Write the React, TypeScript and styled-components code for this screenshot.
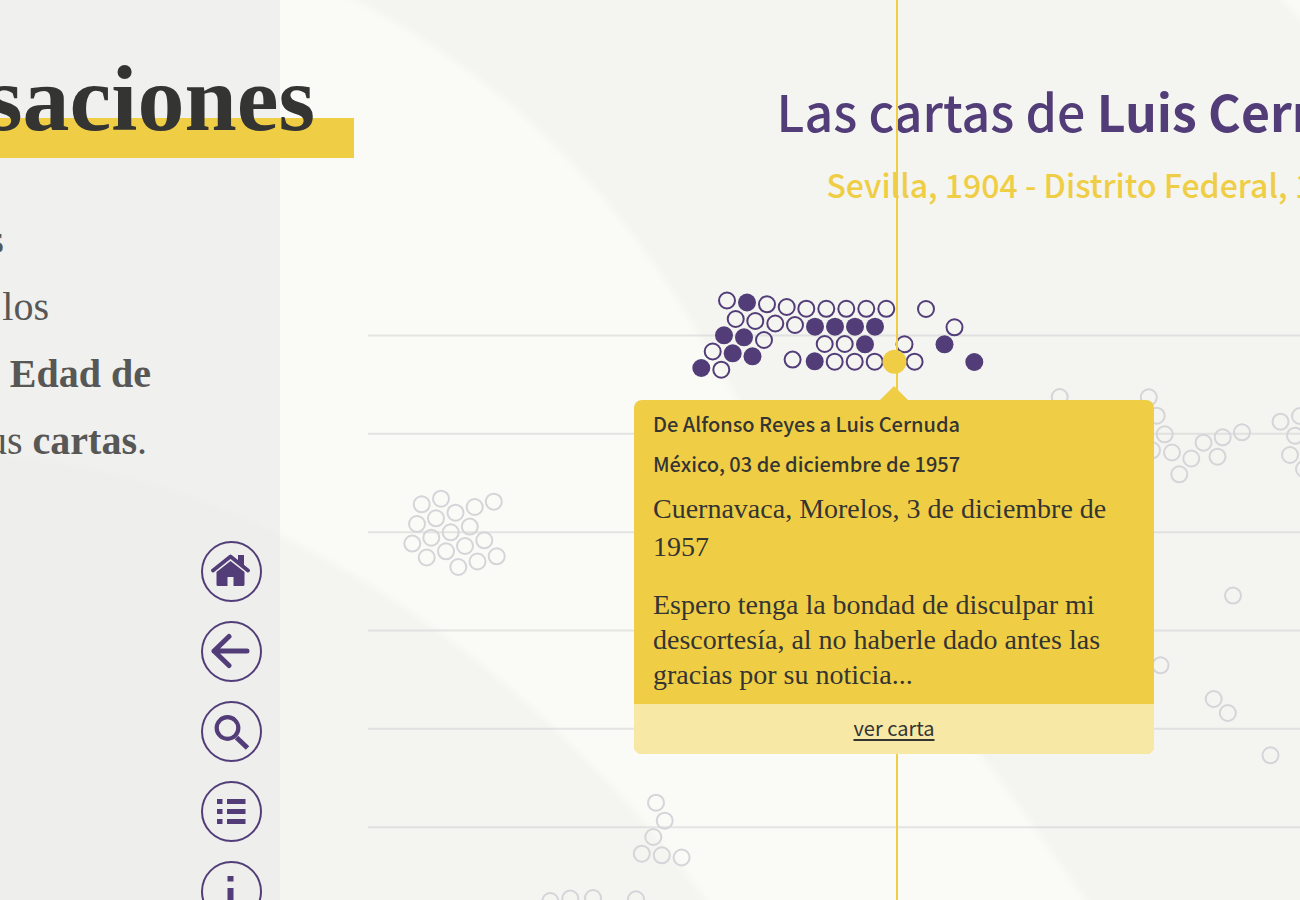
import React from "react";
import styled, { createGlobalStyle } from "styled-components";

const purple = "#523d78";
const yellow = "#efce45";
const sans = `"Noto Sans CJK SC", "Noto Sans", sans-serif`;
const serif = `"Liberation Serif", serif`;

const GlobalStyle = createGlobalStyle`
  * { box-sizing: border-box; }
  body { margin: 0; background: #fafbf6; color: #343433; overflow: hidden; }
  h1, h2, h3, p { margin: 0; font-weight: 400; }
`;

const Page = styled.div`
  position: relative;
  display: flex;
  height: 100vh;
  overflow: hidden;
`;

const Backdrop = styled.svg`
  position: absolute;
  inset: 0;
`;

const Sidebar = styled.aside`
  position: relative;
  z-index: 2;
  display: flex;
  flex: none;
  flex-direction: column;
  align-items: flex-end;
  width: 280px;
  padding-top: 38px;
  background: rgba(234, 234, 234, 0.6);
  font-family: ${serif};
`;

const SiteTitle = styled.h1`
  display: flex;
  justify-content: flex-end;
  width: 354px;
  margin-right: -74px;
  padding-right: 39px;
  background: linear-gradient(${yellow}, ${yellow}) bottom / 100% 40px no-repeat;
  font-size: 94px;
  font-weight: 700;
  line-height: 120px;
`;

const Intro = styled.div`
  align-self: stretch;
  margin: 48px 0 67px;
  color: #575756;
  font-size: 40px;
  line-height: 67px;
`;

const IntroLine = styled.p<{ $end: number }>`
  display: flex;
  justify-content: flex-end;
  width: ${(p) => p.$end}px;
  white-space: pre;
`;

const Nav = styled.nav`
  display: flex;
  flex-direction: column;
  gap: 19px;
  margin-right: 18px;
`;

const NavButton = styled.button`
  display: flex;
  align-items: center;
  justify-content: center;
  width: 61px;
  height: 61px;
  padding: 0;
  border: 2px solid ${purple};
  border-radius: 50%;
  background: none;
  color: ${purple};
  cursor: pointer;
`;

const Main = styled.main`
  position: relative;
  flex: 1 0 auto;
  min-width: 1546px;
  padding-left: 88px;
`;

const Header = styled.header`
  height: 240px;
  padding-top: 74px;
  font-family: ${sans};
  text-align: center;
  white-space: nowrap;
`;

const Heading = styled.h2`
  color: ${purple};
  font-size: 50px;
  font-weight: 500;
  line-height: 72px;
`;

const Subheading = styled.p`
  margin-top: 14px;
  color: ${yellow};
  font-size: 32px;
  font-weight: 500;
  line-height: 48px;
`;

const Plot = styled.svg`
  display: block;
`;

const Marker = styled.div`
  position: absolute;
  top: 0;
  bottom: 0;
  left: 616px;
  width: 2px;
  background: ${yellow};
`;

const Tooltip = styled.article`
  position: absolute;
  top: 400px;
  left: 354px;
  width: 520px;
  border-radius: 8px;
  background: ${yellow};

  &::before {
    content: "";
    position: absolute;
    top: -14px;
    left: 246px;
    border: 14px solid transparent;
    border-top: 0;
    border-bottom-color: ${yellow};
  }
`;

const TooltipBody = styled.div`
  padding: 4px 19px 12px;
`;

const TooltipTitle = styled.h3`
  font-family: ${sans};
  font-size: 20px;
  font-weight: 500;
  line-height: 40px;
`;

const Excerpt = styled.p<{ $line: number; $gap: number }>`
  margin-top: ${(p) => p.$gap}px;
  font-family: ${serif};
  font-size: 28px;
  line-height: ${(p) => p.$line}px;
`;

const TooltipFooter = styled.footer`
  padding-bottom: 2px;
  border-radius: 0 0 8px 8px;
  background: #f8e8a5;
  font-family: ${sans};
  font-size: 20px;
  line-height: 48px;
  text-align: center;

  a {
    color: inherit;
    text-decoration-thickness: 2px;
    text-underline-offset: 3px;
  }
`;

const gridLines = [335.5, 433.8, 532.2, 630.5, 728.8, 827.2];

const sent: [number, number][] = [
  [701.3, 368], [724, 335.3], [744, 337.3], [732.7, 353.3], [752.5, 356.3],
  [747, 302.5], [815, 326.7], [835, 326.7], [855, 326.7], [875, 326.7],
  [865, 344.3], [814.7, 361.3], [944.5, 344.3], [974.3, 362],
];

const received: [number, number][] = [
  [727, 300.5], [767, 304.3], [786.7, 307], [806.3, 308.7], [826.3, 308.8],
  [846.3, 308.8], [866.3, 308.8], [886.3, 308.8], [735.7, 319], [755.3, 321],
  [775.3, 323.5], [795, 325], [764, 340], [712.7, 351.5], [721.3, 369.7],
  [792.6, 359.6], [824.7, 344], [844.7, 344], [834.7, 361.7], [854.7, 361.7],
  [874.7, 361.7], [914.6, 361.7], [904.5, 344.3], [926, 309], [954.5, 327.3],
];

const others: [number, number][] = [
  [1059.7, 397], [1148.8, 397.3], [1156.7, 415.7], [1164.7, 434.3],
  [1152, 450.3], [1172, 452.5], [1191.3, 458.5], [1179.3, 474.3],
  [1203.5, 442.7], [1222.7, 437.3], [1242, 432.3], [1217.5, 456.7],
  [1280.5, 421.7], [1300, 416], [1295, 435.7], [1290, 455], [1304, 469],
  [421.7, 504.3], [441, 498.7], [417, 524], [436, 518.3], [455.5, 512.7],
  [474.7, 507], [493.8, 501.7], [412.3, 543.6], [431.3, 537.7],
  [450.7, 532.3], [469.8, 526.6], [426.7, 557.5], [446, 551.3], [465, 546],
  [484.3, 540.3], [458.3, 567], [477.5, 561.5], [496.7, 556.3],
  [656, 802.7], [664.7, 820.7], [653.3, 837], [641.8, 853.7],
  [661.8, 855.3], [681.6, 857.5], [550.3, 901], [570.3, 898.5],
  [593, 898], [636, 899.3],
  [1233, 595.6], [1160.5, 665.3], [1213.7, 699], [1227.8, 713], [1270.5, 755.3],
];

const icons: { label: string; art: React.ReactNode }[] = [
  {
    label: "Inicio",
    art: (
      <>
        <path d="M3 19.500L20.500 5.500L38 19.500" fill="none" stroke="currentColor" strokeWidth="3.800" strokeLinecap="round" strokeLinejoin="round" />
        <path d="M28 4H34V15L28 10Z" />
        <path d="M20.500 10L34.500 21V33.500Q34.500 35 33 35H23.500V26H17.500V35H8Q6.500 35 6.500 33.500V21Z" />
      </>
    ),
  },
  {
    label: "Volver",
    art: <path d="M37 20H4M19 5.500L4 20L19 34.500" fill="none" stroke="currentColor" strokeWidth="5" strokeLinecap="round" strokeLinejoin="round" />,
  },
  {
    label: "Buscar",
    art: (
      <>
        <circle cx="17.500" cy="17" r="10.800" fill="none" stroke="currentColor" strokeWidth="4.200" />
        <path d="M26.500 26.500L37.500 37" fill="none" stroke="currentColor" strokeWidth="5" />
      </>
    ),
  },
  {
    label: "Índice",
    art: (
      <path d="M7 8H12.500V13H7ZM17 8H35.500V13H17ZM7 18H12.500V23H7ZM17 18H35.500V23H17ZM7 28H12.500V33H7ZM17 28H35.500V33H17Z" />
    ),
  },
  {
    label: "Información",
    art: <path d="M17.500 5H23.500V10.500H17.500ZM17.500 17H23.500V35H17.500Z" />,
  },
];

export default function App() {
  return (
    <Page>
      <GlobalStyle />
      <Backdrop width="100%" height="100%" fill="#f4f5f0" aria-hidden="true">
        <defs>
          <filter id="soft">
            <feGaussianBlur stdDeviation="3" />
          </filter>
        </defs>
        <g filter="url(#soft)">
          <path d="M335 -10C480 60 600 170 690 320C790 490 900 650 1000 780L1100 920H2000V300C1600 260 1380 120 1275 -10Z" />
          <path d="M-20 455C200 465 400 585 540 715C610 780 665 840 720 920H-20Z" />
        </g>
      </Backdrop>

      <Sidebar>
        <SiteTitle>saciones</SiteTitle>
        <Intro>
          <IntroLine $end={4}>s</IntroLine>
          <IntroLine $end={49}>los</IntroLine>
          <IntroLine $end={151}>
            a <b>Edad de</b>
          </IntroLine>
          <IntroLine $end={147}>
            us <b>cartas</b>.
          </IntroLine>
        </Intro>
        <Nav aria-label="Secciones">
          {icons.map((icon) => (
            <NavButton key={icon.label} aria-label={icon.label}>
              <svg width="41" height="41" viewBox="1 0 41 41" fill="currentColor">
                {icon.art}
              </svg>
            </NavButton>
          ))}
        </Nav>
      </Sidebar>

      <Main>
        <Header>
          <Heading>
            Las cartas de <b>Luis Cernuda</b>
          </Heading>
          <Subheading>Sevilla, 1904 - Distrito Federal, 1963</Subheading>
        </Header>
        <Marker />
        <Plot width="1458" height="660" viewBox="368 240 1458 660" role="img" aria-label="Cartas por fecha">
          <g stroke="#c4c4c8" strokeOpacity="0.4" strokeWidth="2">
            {gridLines.map((y) => (
              <line key={y} x1="368" x2="1826" y1={y} y2={y} />
            ))}
          </g>
          <g fill="none" stroke="#d5d4d8" strokeWidth="2">
            {others.map(([x, y]) => (
              <circle key={`${x}-${y}`} cx={x} cy={y} r="8" />
            ))}
          </g>
          <g fill="none" stroke={purple} strokeWidth="2">
            {received.map(([x, y]) => (
              <circle key={`${x}-${y}`} cx={x} cy={y} r="8" />
            ))}
          </g>
          <g fill={purple}>
            {sent.map(([x, y]) => (
              <circle key={`${x}-${y}`} cx={x} cy={y} r="9" />
            ))}
          </g>
          <circle cx="894.500" cy="361.700" r="12" fill={yellow} />
        </Plot>
        <Tooltip>
          <TooltipBody>
            <TooltipTitle>De Alfonso Reyes a Luis Cernuda</TooltipTitle>
            <TooltipTitle>México, 03 de diciembre de 1957</TooltipTitle>
            <Excerpt $line={38} $gap={6}>
              Cuernavaca, Morelos, 3 de diciembre de 1957
            </Excerpt>
            <Excerpt $line={35} $gap={21}>
              Espero tenga la bondad de disculpar mi descortesía, al no haberle dado antes las gracias por su noticia...
            </Excerpt>
          </TooltipBody>
          <TooltipFooter>
            <a href="#carta">ver carta</a>
          </TooltipFooter>
        </Tooltip>
      </Main>
    </Page>
  );
}
